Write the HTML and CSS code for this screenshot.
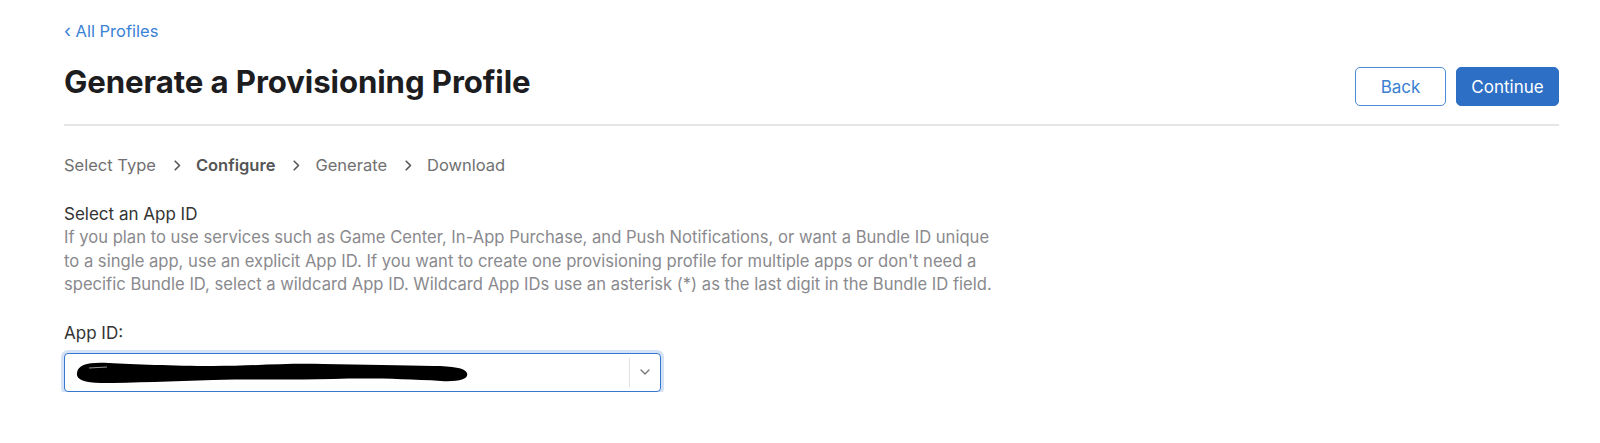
FILE: index.html
```html
<!DOCTYPE html>
<html lang="en">
<head>
<meta charset="utf-8">
<title>Generate a Provisioning Profile</title>
<link rel="stylesheet" href="styles.css">
</head>
<body>
<div class="page">
  <a class="back-link" href="#"><span class="back-chev">‹</span> All Profiles</a>
  <div class="header">
    <h1 class="title">Generate a Provisioning Profile</h1>
    <div class="actions">
      <button class="btn btn-outline">Back</button>
      <button class="btn btn-primary">Continue</button>
    </div>
  </div>

  <nav class="steps">
    <span class="step">Select Type</span>
    <svg class="chev" width="7" height="11" viewBox="0 0 7 11"><path d="M1.2 1.2 L5.5 5.5 L1.2 9.8" fill="none" stroke="#555" stroke-width="1.6" stroke-linecap="round" stroke-linejoin="round"/></svg>
    <span class="step step-current">Configure</span>
    <svg class="chev" width="7" height="11" viewBox="0 0 7 11"><path d="M1.2 1.2 L5.5 5.5 L1.2 9.8" fill="none" stroke="#555" stroke-width="1.6" stroke-linecap="round" stroke-linejoin="round"/></svg>
    <span class="step">Generate</span>
    <svg class="chev" width="7" height="11" viewBox="0 0 7 11"><path d="M1.2 1.2 L5.5 5.5 L1.2 9.8" fill="none" stroke="#555" stroke-width="1.6" stroke-linecap="round" stroke-linejoin="round"/></svg>
    <span class="step">Download</span>
  </nav>

  <section class="section">
    <h2 class="section-title">Select an App ID</h2>
    <p class="section-desc">If you plan to use services such as Game Center, In-App Purchase, and Push Notifications, or want a Bundle ID unique to a single app, use an explicit App ID. If you want to create one provisioning profile for multiple apps or don't need a specific Bundle ID, select a wildcard App ID. Wildcard App IDs use an asterisk (*) as the last digit in the Bundle ID field.</p>
  </section>

  <div class="field">
    <label class="field-label">App ID:</label>
    <div class="select">
      <div class="select-value">
        <svg class="redact" width="400" height="28" viewBox="0 0 400 28">
          <path d="M4 15 C 5 6, 16 4, 36 5 C 60 6, 100 8, 140 8 C 180 8, 210 5, 250 6 C 290 7, 330 7, 360 8 C 380 8, 392 10, 394 15 C 396 21, 386 24, 368 23 C 330 21, 300 20, 260 21 C 220 22, 180 21, 140 22 C 100 23, 60 25, 28 25 C 10 25, 3 21, 4 15 Z" fill="#000"/>
          <path d="M16 10 L 34 9" stroke="#fff" stroke-width="1" opacity="0.6"/>
        </svg>
      </div>
      <div class="select-sep"></div>
      <div class="select-arrow">
        <svg width="10" height="6" viewBox="0 0 10 6"><path d="M1 1 L5 5 L9 1" fill="none" stroke="#777" stroke-width="1.4" stroke-linecap="round" stroke-linejoin="round"/></svg>
      </div>
    </div>
  </div>
</div>
</body>
</html>
```
FILE: styles.css
```css
* { box-sizing: border-box; }

html, body {
  margin: 0;
  padding: 0;
  background: #ffffff;
}

body {
  font-family: Inter, "Noto Sans", "Liberation Sans", sans-serif;
  color: #333336;
}

.page {
  padding: 21px 41px 0 64px;
}

.back-link {
  display: inline-block;
  font-size: 16.5px;
  line-height: 20px;
  color: #3a82d6;
  text-decoration: none;
}

.back-chev {
  font-size: 18px;
}

.header {
  display: flex;
  justify-content: space-between;
  align-items: flex-start;
  margin-top: 23px;
  padding-bottom: 18px;
  border-bottom: 2px solid #e6e6e6;
}

.title {
  margin: 0;
  font-size: 31.2px;
  line-height: 36px;
  font-weight: 700;
  color: #1d1d1f;
  letter-spacing: -0.1px;
}

.actions {
  display: flex;
  gap: 10px;
  margin-top: 3px;
}

.btn {
  height: 39px;
  border-radius: 5px;
  font-family: inherit;
  font-size: 17px;
  font-weight: 400;
  cursor: pointer;
}

.btn-outline {
  width: 91px;
  background: #fff;
  color: #3a7fd0;
  border: 1px solid #4b8ad6;
}

.btn-primary {
  width: 103px;
  background: #2c6fc5;
  color: #fff;
  border: 1px solid #2c6fc5;
}

.steps {
  display: flex;
  align-items: center;
  margin-top: 27px;
  height: 24px;
  font-size: 16.5px;
  color: #707070;
}

.step-current {
  font-weight: 600;
  color: #555;
}

.chev {
  margin: 0 15px 0 18px;
}

.section {
  margin-top: 26px;
}

.section-title {
  margin: 0;
  font-size: 17px;
  line-height: 23px;
  font-weight: 400;
  color: #333;
}

.section-desc {
  margin: 0;
  width: 934px;
  font-size: 16.6px;
  line-height: 23.5px;
  color: #8a8a8e;
}

.field {
  margin-top: 25px;
}

.field-label {
  display: block;
  font-size: 17px;
  line-height: 23px;
  font-weight: 400;
  color: #333;
}

.select {
  margin-top: 8px;
  width: 597px;
  height: 39px;
  display: flex;
  align-items: center;
  border: 1px solid #3778cf;
  border-radius: 4px;
  box-shadow: 0 0 0 3px rgba(80, 140, 220, 0.25);
  background: #fff;
}

.select-value {
  flex: 1;
  display: flex;
  align-items: center;
  padding-left: 8px;
  height: 100%;
}

.redact {
  display: block;
}

.select-sep {
  width: 1px;
  height: 29px;
  background: #e2e2e2;
}

.select-arrow {
  width: 30px;
  display: flex;
  justify-content: center;
  align-items: center;
}

.select-arrow svg {
  display: block;
}
```
